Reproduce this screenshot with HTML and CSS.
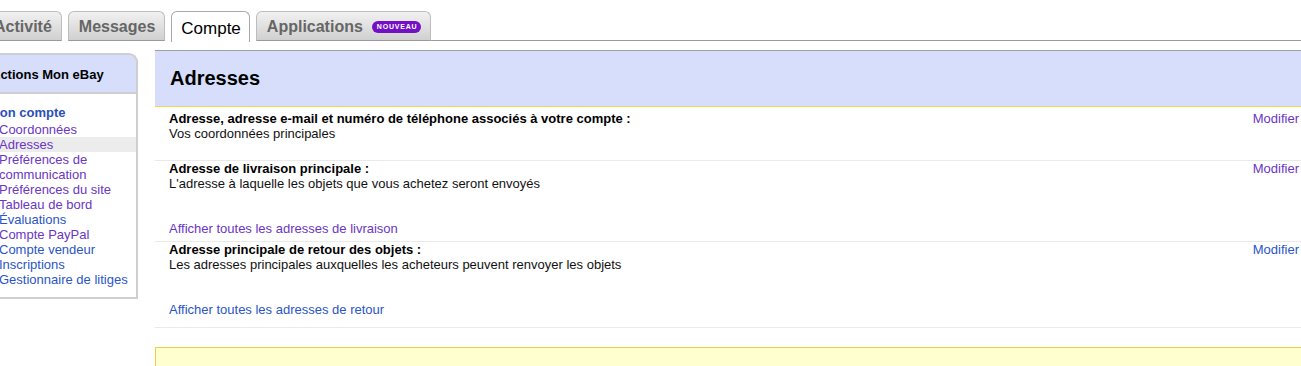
FILE: index.html
```html
<!DOCTYPE html>
<html lang="fr">
<head>
<meta charset="utf-8">
<title>Mon eBay - Adresses</title>
<link rel="stylesheet" href="styles.css">
</head>
<body>
<div class="page">
  <div class="tabs">
    <div class="tab">Activité</div>
    <div class="tab">Messages</div>
    <div class="tab active">Compte</div>
    <div class="tab">Applications <span class="badge">NOUVEAU</span></div>
    <div class="tabfill"></div>
  </div>
  <div class="layout">
    <aside class="side">
      <div class="side-head">Actions Mon eBay</div>
      <div class="side-body">
        <div class="side-title">Mon compte</div>
        <a class="item v" href="#">Coordonnées</a>
        <a class="item v sel" href="#">Adresses</a>
        <a class="item v" href="#">Préférences de communication</a>
        <a class="item v" href="#">Préférences du site</a>
        <a class="item v" href="#">Tableau de bord</a>
        <a class="item" href="#">Évaluations</a>
        <a class="item v" href="#">Compte PayPal</a>
        <a class="item" href="#">Compte vendeur</a>
        <a class="item" href="#">Inscriptions</a>
        <a class="item" href="#">Gestionnaire de litiges</a>
      </div>
    </aside>
    <main class="main">
      <div class="panel-head"><h1>Adresses</h1></div>
      <div class="row r1">
        <div class="row-text">
          <div class="t">Adresse, adresse e-mail et numéro de téléphone associés à votre compte :</div>
          <div class="d">Vos coordonnées principales</div>
        </div>
        <a class="mod v" href="#">Modifier</a>
      </div>
      <div class="row r2">
        <div class="row-text">
          <div class="t">Adresse de livraison principale :</div>
          <div class="d">L'adresse à laquelle les objets que vous achetez seront envoyés</div>
          <a class="all v" href="#">Afficher toutes les adresses de livraison</a>
        </div>
        <a class="mod v" href="#">Modifier</a>
      </div>
      <div class="row r3">
        <div class="row-text">
          <div class="t">Adresse principale de retour des objets :</div>
          <div class="d">Les adresses principales auxquelles les acheteurs peuvent renvoyer les objets</div>
          <a class="all" href="#">Afficher toutes les adresses de retour</a>
        </div>
        <a class="mod" href="#">Modifier</a>
      </div>
      <div class="note"></div>
    </main>
  </div>
</div>
</body>
</html>
```
FILE: styles.css
```css
html, body {
  margin: 0;
  padding: 0;
  background: #fff;
  overflow: hidden;
}
body {
  font-family: "Liberation Sans", Arial, sans-serif;
  font-size: 13px;
  color: #111;
}
.page {
  width: 1301px;
  height: 366px;
  overflow: hidden;
}
.tabs {
  display: flex;
  align-items: flex-end;
  gap: 6px;
  margin-left: -17px;
  padding-top: 11px;
  height: 30px;
}
.tab {
  box-sizing: border-box;
  height: 30px;
  padding: 1px 9px 0 10px;
  display: flex;
  align-items: center;
  font-size: 16px;
  font-weight: bold;
  color: #666;
  background: linear-gradient(#f1f1f1, #d0d0d0);
  border: 1px solid #bdbdbd;
  border-bottom: 1px solid #9a9a9a;
  border-radius: 6px 6px 0 0;
  white-space: nowrap;
}
.tab.active {
  background: #fff;
  color: #000;
  font-weight: normal;
  font-size: 17px;
  height: 31px;
  margin-bottom: -1px;
  padding: 3px 8px 0 9px;
  border-color: #a8a8a8;
  border-bottom: none;
}
.tabfill {
  flex: 1;
  height: 30px;
  border-bottom: 1px solid #9a9a9a;
  margin-left: -6px;
}
.badge {
  display: inline-block;
  margin-left: 9px;
  background: #7410c4;
  color: #fff;
  font-size: 7px;
  font-weight: bold;
  letter-spacing: 0.8px;
  line-height: 12px;
  height: 12px;
  padding: 0 4px 0 5px;
  border-radius: 6px;
}
.layout {
  display: flex;
  align-items: flex-start;
  margin-top: 9px;
}
.side {
  width: 158px;
  margin-left: -20px;
  margin-top: 3px;
  flex: none;
}
.side-head {
  box-sizing: border-box;
  height: 39px;
  background: #d6defc;
  border: 2px solid #cfcfcf;
  border-left: none;
  border-bottom: none;
  border-radius: 0 9px 0 0;
  padding: 12px 0 0 11px;
  font-weight: bold;
  font-size: 13px;
  color: #000;
}
.side-body {
  box-sizing: border-box;
  border: 2px solid #cfcfcf;
  border-left: none;
  background: #fff;
  padding: 11px 0 9px 9px;
  height: 207px;
}
.side-title {
  font-weight: bold;
  color: #2a50b8;
  line-height: 15px;
  font-size: 13px;
  margin-bottom: 2px;
}
.item {
  display: block;
  line-height: 15px;
  padding-left: 10px;
  color: #2a55c8;
  text-decoration: none;
}
.item.v { color: #6a36c4; }
.item.sel { background: #ececec; margin-left: -9px; padding-left: 19px; }
.main {
  flex: 1;
  margin-left: 17px;
  min-width: 0;
}
.panel-head {
  box-sizing: border-box;
  height: 57px;
  background: #d6defc;
  border-top: 1px solid #a0a0a0;
  border-bottom: 1px solid #f6d45c;
  padding-left: 15px;
  display: flex;
  align-items: center;
}
.panel-head h1 {
  margin: 0 0 1px 0;
  font-size: 20px;
  font-weight: bold;
  color: #000;
}
.row {
  display: flex;
  justify-content: space-between;
  border-bottom: 1px solid #e9e9e9;
  padding-left: 14px;
  padding-right: 2px;
  line-height: 15px;
}
.row.r1 { padding-top: 4px; padding-bottom: 19px; }
.row.r2 { padding-top: 0; padding-bottom: 5px; }
.row.r3 { padding-top: 0; padding-bottom: 10px; }
.row-text { display: flex; flex-direction: column; }
.t { font-weight: bold; color: #000; }
.d { color: #111; }
.all {
  margin-top: 30px;
  color: #2a55c8;
  text-decoration: none;
}
.mod {
  color: #2a55c8;
  text-decoration: none;
}
.v { color: #6a36c4; }
.note {
  margin-top: 19px;
  height: 40px;
  background: #ffffcf;
  border: 1px solid #f4cd3c;
  border-right: none;
}
```
